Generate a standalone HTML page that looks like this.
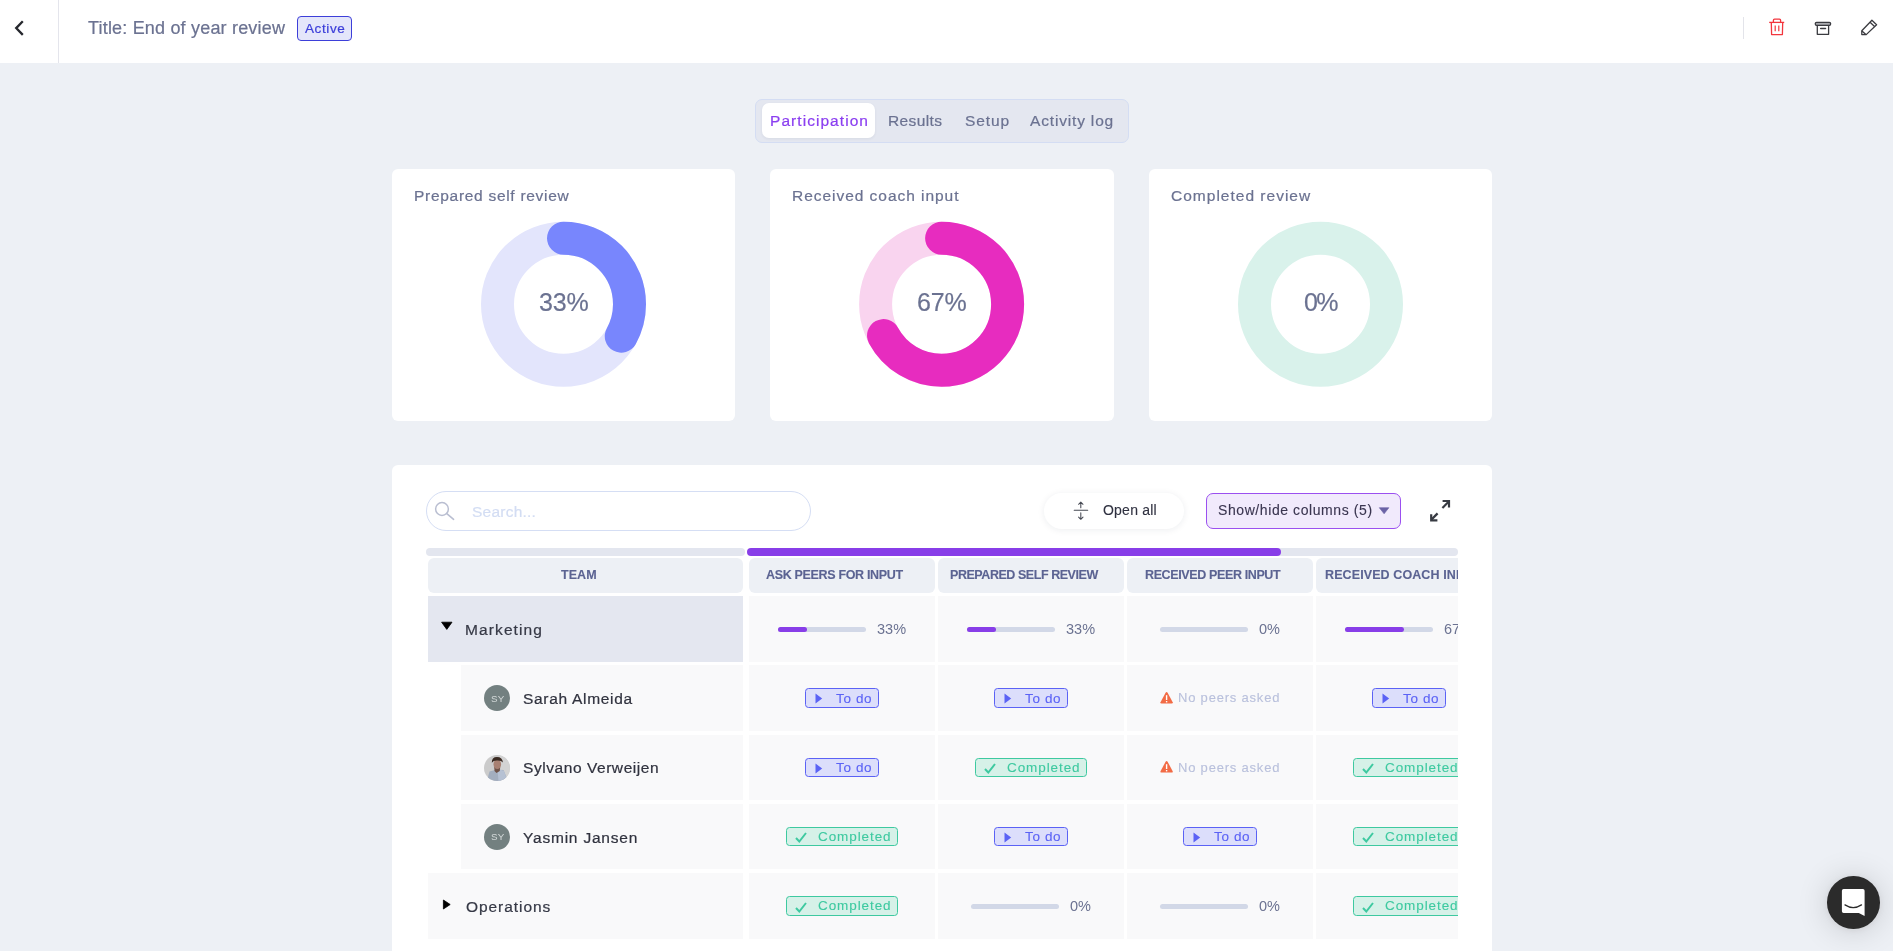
<!DOCTYPE html>
<html><head><meta charset="utf-8">
<style>
html,body{margin:0;padding:0;}
body{width:1893px;height:951px;overflow:hidden;background:#edf0f5;position:relative;font-family:"Liberation Sans",sans-serif;}
.a{position:absolute;}
.t{position:absolute;white-space:nowrap;line-height:1;font-family:"Liberation Sans",sans-serif;will-change:transform;}
.s3{-webkit-text-stroke:0.22px currentColor;}
.s2{-webkit-text-stroke:0.2px currentColor;}
.s1{-webkit-text-stroke:0.12px currentColor;}
.ic{position:absolute;overflow:visible;}
.card{position:absolute;background:#fff;border-radius:6px;}
.hc{position:absolute;background:#edf0f5;border-radius:6px;top:558px;height:34.6px;}
.cell{position:absolute;background:#f9f9fa;}
.bd{position:absolute;box-sizing:border-box;border-radius:3.5px;border:1px solid;}
.bd.todo{background:#dcdefb;border-color:#5b62f5;}
.bd.comp{background:#d6f1e8;border-color:#3ec9a0;}
.pb{position:absolute;height:5px;border-radius:3px;background:#d2d8e7;}
.pf{position:absolute;height:5px;border-radius:3px;background:#883ee8;}
.av{position:absolute;width:26px;height:26px;border-radius:50%;background:#738080;}
</style></head>
<body>
<!-- header -->
<div class="a" style="left:0;top:0;width:1893px;height:63px;background:#fff;"></div>
<div class="a" style="left:58px;top:0;width:1px;height:63px;background:#e4e5ec;"></div>
<svg class="ic" style="left:0;top:0" width="60" height="60"><path d="M22.8 21.3 L16.2 28.1 L22.8 34.9" fill="none" stroke="#26282e" stroke-width="2.3" stroke-linecap="butt" stroke-linejoin="miter"/></svg>
<div class="a" style="left:297px;top:15.5px;width:55px;height:25.5px;box-sizing:border-box;border:1.3px solid #3d3fd9;border-radius:4px;background:#e4e6fa;"></div>
<div class="a" style="left:1743px;top:17px;width:1px;height:22px;background:#e3e4ea;"></div>
<svg class="ic" style="left:1760px;top:10px" width="34" height="34" viewBox="0 0 34 34">
 <g fill="none" stroke="#f2363e" stroke-width="1.3" stroke-linejoin="round">
  <path d="M9.2 12.4 H24.2"/>
  <path d="M13.4 12.3 V10.3 Q13.4 9.2 14.5 9.2 H19.5 Q20.6 9.2 20.6 10.3 V12.3"/>
  <path d="M11.3 12.5 L11.6 24.6 H22.4 L22.7 12.5"/>
  <path d="M15.2 15.5 V21.3 M18.8 15.5 V21.3" stroke-width="1.2"/>
 </g>
</svg>
<svg class="ic" style="left:1805px;top:10px" width="34" height="34" viewBox="0 0 34 34">
 <g fill="none" stroke="#3a3b40" stroke-width="1.3" stroke-linejoin="round">
  <rect x="10.3" y="12.4" width="15.3" height="2.9" rx="1.2" fill="#a9aaae"/>
  <path d="M12.3 15.4 V24.3 H23.6 V15.4"/>
  <path d="M15.6 18.5 H20.6" stroke-linecap="round"/>
 </g>
</svg>
<svg class="ic" style="left:1850px;top:10px" width="34" height="34" viewBox="0 0 34 34">
 <g fill="none" stroke="#3a3b40" stroke-width="1.3" stroke-linejoin="round">
  <path d="M11.8 24.6 L11.8 20.8 L21.9 10.3 L26.6 14.8 L16.2 24.6 Z"/>
  <path d="M20.1 12.2 L24.8 16.7"/>
  <path d="M11.9 20.9 L15.9 24.5"/>
 </g>
</svg>

<!-- tabs -->
<div class="a" style="left:755px;top:99px;width:374px;height:44px;box-sizing:border-box;border:1px solid #d4ddf3;border-radius:7px;background:#e4e7f0;"></div>
<div class="a" style="left:762px;top:103px;width:113px;height:35px;border-radius:7px;background:#fff;box-shadow:0 1px 3px rgba(40,50,80,0.07);"></div>

<!-- cards -->
<div class="card" style="left:392px;top:169px;width:343px;height:252px;"></div>
<div class="card" style="left:770px;top:169px;width:344px;height:252px;"></div>
<div class="card" style="left:1149px;top:169px;width:343px;height:252px;"></div>
<svg class="ic" style="left:0;top:0" width="1893" height="451">
 <circle cx="563.5" cy="304.2" r="66" fill="none" stroke="#e3e5fc" stroke-width="33"/>
 <circle cx="563.5" cy="304.2" r="66" fill="none" stroke="#7886fd" stroke-width="33" stroke-linecap="round" stroke-dasharray="136.85 1000" transform="rotate(-90 563.5 304.2)"/>
 <circle cx="941.6" cy="304.2" r="66" fill="none" stroke="#f9d4ef" stroke-width="33"/>
 <circle cx="941.6" cy="304.2" r="66" fill="none" stroke="#e72cbf" stroke-width="33" stroke-linecap="round" stroke-dasharray="277.84 1000" transform="rotate(-90 941.6 304.2)"/>
 <circle cx="1320.5" cy="304.2" r="66" fill="none" stroke="#d9f2eb" stroke-width="33"/>
</svg>

<!-- table card -->
<div class="card" style="left:392px;top:465px;width:1100px;height:520px;"></div>
<div class="a" style="left:426px;top:491px;width:384.5px;height:39.5px;box-sizing:border-box;border:1px solid #d5def4;border-radius:20px;background:#fff;"></div>
<svg class="ic" style="left:0;top:0" width="500" height="540"><circle cx="442" cy="509" r="6.4" fill="none" stroke="#b9bed1" stroke-width="1.5"/><path d="M446.8 513.6 L453.6 519.3" stroke="#b9bed1" stroke-width="1.6" stroke-linecap="round"/></svg>
<div class="a" style="left:1044px;top:492.5px;width:140px;height:36.5px;border-radius:19px;background:#fff;box-shadow:0 1px 7px rgba(30,40,60,0.08);"></div>
<svg class="ic" style="left:1060px;top:495px" width="40" height="30" viewBox="0 0 40 30">
 <g fill="none" stroke="#464953" stroke-width="1.05" stroke-linecap="round" stroke-linejoin="round">
  <path d="M14.2 15.3 H27.7"/>
  <path d="M20.8 7.3 V12.8 M18.6 9.3 L20.8 7.1 L23 9.3"/>
  <path d="M20.8 17.8 V24.2 M18.6 22.1 L20.8 24.3 L23 22.1"/>
 </g>
</svg>
<div class="a" style="left:1206px;top:493px;width:195px;height:36px;box-sizing:border-box;border:1.5px solid #9b4ff0;border-radius:7px;background:#f1eafc;"></div>
<svg class="ic" style="left:1370px;top:500px" width="30" height="20"><path d="M9.3 7.7 H18.9 L14.1 13.8 Z" fill="#6b63a6" stroke="#6b63a6" stroke-width="0.6" stroke-linejoin="round"/></svg>
<svg class="ic" style="left:1420px;top:490px" width="40" height="40" viewBox="0 0 40 40">
 <g fill="none" stroke="#373a42" stroke-width="2.2" stroke-linecap="butt">
  <path d="M11.4 29.6 L17.6 23.4"/><path d="M11.2 24.2 V30.4 H17.4"/>
  <path d="M28.6 11.8 L22.4 18"/><path d="M22.6 11 H29 V17.4"/>
 </g>
</svg>

<!-- scrollbar -->
<div class="a" style="left:426px;top:548.2px;width:319px;height:7.5px;border-radius:4px;background:#e3e6ef;"></div>
<div class="a" style="left:1270px;top:548.2px;width:188px;height:7.5px;border-radius:4px;background:#e3e6ef;"></div>
<div class="a" style="left:747px;top:548.2px;width:534px;height:7.5px;border-radius:4px;background:#883ee8;"></div>

<!-- first col -->
<div class="hc" style="left:428px;width:315px;"></div>
<div class="a" style="left:428px;top:596px;width:315px;height:65.6px;background:#e4e7f0;"></div>
<div class="a" style="left:461px;top:665.25px;width:282px;height:65.6px;background:#f9f9fa;"></div>
<div class="a" style="left:461px;top:734.5px;width:282px;height:65.6px;background:#f9f9fa;"></div>
<div class="a" style="left:461px;top:803.75px;width:282px;height:65.6px;background:#f9f9fa;"></div>
<div class="a" style="left:428px;top:873px;width:315px;height:65.6px;background:#f9f9fa;"></div>
<svg class="ic" style="left:430px;top:610px" width="30" height="30"><path d="M11.6 12.2 H22 L16.8 19.4 Z" fill="#000" stroke="#000" stroke-width="0.8" stroke-linejoin="round"/></svg>
<svg class="ic" style="left:430px;top:890px" width="30" height="30"><path d="M13.4 10 L20.2 14.5 L13.4 19 Z" fill="#000" stroke="#000" stroke-width="0.8" stroke-linejoin="round"/></svg>
<div class="av" style="left:484px;top:685.4px;"></div>
<div class="t" style="left:490.6px;top:693.8px;font-size:9.8px;color:#d3d8d8;letter-spacing:0.3px">SY</div>
<svg class="ic" style="left:484px;top:754.9px" width="26" height="26" viewBox="0 0 26 26"><defs><clipPath id="avc"><circle cx="13" cy="13" r="13"/></clipPath></defs>
<g clip-path="url(#avc)"><rect width="26" height="26" fill="#cbcbcb"/><rect x="15" width="11" height="26" fill="#d3d3d3"/>
<path d="M5.5 16.5 Q12 13.8 19.5 15 L24 26 H3 Z" fill="#a3aebf"/><path d="M13.5 14.5 Q17.5 14.3 20 16 L23.5 26 H14.5 Z" fill="#b6c1d3"/>
<path d="M10.2 12 L16.2 12 L15.8 16 L12.5 18 L10.5 16Z" fill="#6f5248"/>
<ellipse cx="13.3" cy="9.2" rx="3.8" ry="4.9" fill="#a88072"/>
<path d="M7.8 7.8 Q7.6 1.9 13 1.9 Q18.6 1.9 18.9 7.6 Q17.2 5.4 13.3 5.6 Q9.6 5.4 7.8 7.8Z" fill="#3a2a22"/>
</g></svg>
<div class="av" style="left:484px;top:823.9px;"></div>
<div class="t" style="left:490.6px;top:832.3px;font-size:9.8px;color:#d3d8d8;letter-spacing:0.3px">SY</div>

<!-- other columns (clipped) -->
<div class="a" style="left:0;top:0;width:1458px;height:951px;overflow:hidden;">
<div class="hc" style="left:749px;width:186px;"></div>
<div class="hc" style="left:938px;width:186px;"></div>
<div class="hc" style="left:1127px;width:186px;"></div>
<div class="hc" style="left:1316px;width:186px;"></div>
<div class="cell" style="left:749px;top:596.00px;width:186px;height:65.6px"></div>
<div class="pb" style="left:778.19px;top:627.10px;width:88px"></div><div class="pf" style="left:778.19px;top:627.10px;width:29.04px"></div><div class="t" style="left:876.69px;top:621.73px;font-size:14.5px;color:#6b7291">33%</div>
<div class="cell" style="left:938px;top:596.00px;width:186px;height:65.6px"></div>
<div class="pb" style="left:967.19px;top:627.10px;width:88px"></div><div class="pf" style="left:967.19px;top:627.10px;width:29.04px"></div><div class="t" style="left:1065.69px;top:621.73px;font-size:14.5px;color:#6b7291">33%</div>
<div class="cell" style="left:1127px;top:596.00px;width:186px;height:65.6px"></div>
<div class="pb" style="left:1160.22px;top:627.10px;width:88px"></div><div class="t" style="left:1258.72px;top:621.73px;font-size:14.5px;color:#6b7291">0%</div>
<div class="cell" style="left:1316px;top:596.00px;width:186px;height:65.6px"></div>
<div class="pb" style="left:1345.19px;top:627.10px;width:88px"></div><div class="pf" style="left:1345.19px;top:627.10px;width:58.96px"></div><div class="t" style="left:1443.69px;top:621.73px;font-size:14.5px;color:#6b7291">67%</div>
<div class="cell" style="left:749px;top:665.25px;width:186px;height:65.6px"></div>
<div class="bd todo" style="left:805.00px;top:688.30px;width:74px;height:19.5px"><svg class="ic" style="left:9px;top:4px" width="8" height="11" viewBox="0 0 8 11"><path d="M0.5 0.5 L7.2 5.5 L0.5 10.5Z" fill="#5b62f5"/></svg><div class="t s1" style="left:30.20px;top:2.37px;font-size:13.5px;color:#5b62f5;letter-spacing:0.646px">To do</div></div>
<div class="cell" style="left:938px;top:665.25px;width:186px;height:65.6px"></div>
<div class="bd todo" style="left:994.00px;top:688.30px;width:74px;height:19.5px"><svg class="ic" style="left:9px;top:4px" width="8" height="11" viewBox="0 0 8 11"><path d="M0.5 0.5 L7.2 5.5 L0.5 10.5Z" fill="#5b62f5"/></svg><div class="t s1" style="left:30.20px;top:2.37px;font-size:13.5px;color:#5b62f5;letter-spacing:0.646px">To do</div></div>
<div class="cell" style="left:1127px;top:665.25px;width:186px;height:65.6px"></div>
<svg class="ic" style="left:1159.50px;top:691.05px" width="14" height="14" viewBox="0 0 14 14"><path d="M6.6 1.1 Q7.2 1.1 7.6 1.8 L12.7 11.2 Q13.1 12.6 11.7 12.6 L1.5 12.6 Q0.1 12.6 0.5 11.2 L5.6 1.8 Q6 1.1 6.6 1.1Z" fill="#f26b45"/><rect x="5.9" y="4.2" width="1.4" height="4.8" fill="#fff"/><rect x="5.9" y="10" width="1.4" height="1.4" fill="#fff"/></svg><div class="t s1" style="left:1178.30px;top:691.35px;font-size:13px;color:#b9c0dc;letter-spacing:0.798px">No peers asked</div>
<div class="cell" style="left:1316px;top:665.25px;width:186px;height:65.6px"></div>
<div class="bd todo" style="left:1372.00px;top:688.30px;width:74px;height:19.5px"><svg class="ic" style="left:9px;top:4px" width="8" height="11" viewBox="0 0 8 11"><path d="M0.5 0.5 L7.2 5.5 L0.5 10.5Z" fill="#5b62f5"/></svg><div class="t s1" style="left:30.20px;top:2.37px;font-size:13.5px;color:#5b62f5;letter-spacing:0.646px">To do</div></div>
<div class="cell" style="left:749px;top:734.50px;width:186px;height:65.6px"></div>
<div class="bd todo" style="left:805.00px;top:757.55px;width:74px;height:19.5px"><svg class="ic" style="left:9px;top:4px" width="8" height="11" viewBox="0 0 8 11"><path d="M0.5 0.5 L7.2 5.5 L0.5 10.5Z" fill="#5b62f5"/></svg><div class="t s1" style="left:30.20px;top:2.37px;font-size:13.5px;color:#5b62f5;letter-spacing:0.646px">To do</div></div>
<div class="cell" style="left:938px;top:734.50px;width:186px;height:65.6px"></div>
<div class="bd comp" style="left:975.00px;top:757.55px;width:112px;height:19.5px"><svg class="ic" style="left:8px;top:4.5px" width="12" height="11" viewBox="0 0 12 11"><path d="M1 6 L4.3 9.5 L11 1" fill="none" stroke="#3ec9a0" stroke-width="2"/></svg><div class="t s1" style="left:30.70px;top:2.17px;font-size:13.5px;color:#3ec9a0;letter-spacing:0.915px">Completed</div></div>
<div class="cell" style="left:1127px;top:734.50px;width:186px;height:65.6px"></div>
<svg class="ic" style="left:1159.50px;top:760.30px" width="14" height="14" viewBox="0 0 14 14"><path d="M6.6 1.1 Q7.2 1.1 7.6 1.8 L12.7 11.2 Q13.1 12.6 11.7 12.6 L1.5 12.6 Q0.1 12.6 0.5 11.2 L5.6 1.8 Q6 1.1 6.6 1.1Z" fill="#f26b45"/><rect x="5.9" y="4.2" width="1.4" height="4.8" fill="#fff"/><rect x="5.9" y="10" width="1.4" height="1.4" fill="#fff"/></svg><div class="t s1" style="left:1178.30px;top:760.60px;font-size:13px;color:#b9c0dc;letter-spacing:0.798px">No peers asked</div>
<div class="cell" style="left:1316px;top:734.50px;width:186px;height:65.6px"></div>
<div class="bd comp" style="left:1353.00px;top:757.55px;width:112px;height:19.5px"><svg class="ic" style="left:8px;top:4.5px" width="12" height="11" viewBox="0 0 12 11"><path d="M1 6 L4.3 9.5 L11 1" fill="none" stroke="#3ec9a0" stroke-width="2"/></svg><div class="t s1" style="left:30.70px;top:2.17px;font-size:13.5px;color:#3ec9a0;letter-spacing:0.915px">Completed</div></div>
<div class="cell" style="left:749px;top:803.75px;width:186px;height:65.6px"></div>
<div class="bd comp" style="left:786.00px;top:826.80px;width:112px;height:19.5px"><svg class="ic" style="left:8px;top:4.5px" width="12" height="11" viewBox="0 0 12 11"><path d="M1 6 L4.3 9.5 L11 1" fill="none" stroke="#3ec9a0" stroke-width="2"/></svg><div class="t s1" style="left:30.70px;top:2.17px;font-size:13.5px;color:#3ec9a0;letter-spacing:0.915px">Completed</div></div>
<div class="cell" style="left:938px;top:803.75px;width:186px;height:65.6px"></div>
<div class="bd todo" style="left:994.00px;top:826.80px;width:74px;height:19.5px"><svg class="ic" style="left:9px;top:4px" width="8" height="11" viewBox="0 0 8 11"><path d="M0.5 0.5 L7.2 5.5 L0.5 10.5Z" fill="#5b62f5"/></svg><div class="t s1" style="left:30.20px;top:2.37px;font-size:13.5px;color:#5b62f5;letter-spacing:0.646px">To do</div></div>
<div class="cell" style="left:1127px;top:803.75px;width:186px;height:65.6px"></div>
<div class="bd todo" style="left:1183.00px;top:826.80px;width:74px;height:19.5px"><svg class="ic" style="left:9px;top:4px" width="8" height="11" viewBox="0 0 8 11"><path d="M0.5 0.5 L7.2 5.5 L0.5 10.5Z" fill="#5b62f5"/></svg><div class="t s1" style="left:30.20px;top:2.37px;font-size:13.5px;color:#5b62f5;letter-spacing:0.646px">To do</div></div>
<div class="cell" style="left:1316px;top:803.75px;width:186px;height:65.6px"></div>
<div class="bd comp" style="left:1353.00px;top:826.80px;width:112px;height:19.5px"><svg class="ic" style="left:8px;top:4.5px" width="12" height="11" viewBox="0 0 12 11"><path d="M1 6 L4.3 9.5 L11 1" fill="none" stroke="#3ec9a0" stroke-width="2"/></svg><div class="t s1" style="left:30.70px;top:2.17px;font-size:13.5px;color:#3ec9a0;letter-spacing:0.915px">Completed</div></div>
<div class="cell" style="left:749px;top:873.00px;width:186px;height:65.6px"></div>
<div class="bd comp" style="left:786.00px;top:896.05px;width:112px;height:19.5px"><svg class="ic" style="left:8px;top:4.5px" width="12" height="11" viewBox="0 0 12 11"><path d="M1 6 L4.3 9.5 L11 1" fill="none" stroke="#3ec9a0" stroke-width="2"/></svg><div class="t s1" style="left:30.70px;top:2.17px;font-size:13.5px;color:#3ec9a0;letter-spacing:0.915px">Completed</div></div>
<div class="cell" style="left:938px;top:873.00px;width:186px;height:65.6px"></div>
<div class="pb" style="left:971.22px;top:904.10px;width:88px"></div><div class="t" style="left:1069.72px;top:898.73px;font-size:14.5px;color:#6b7291">0%</div>
<div class="cell" style="left:1127px;top:873.00px;width:186px;height:65.6px"></div>
<div class="pb" style="left:1160.22px;top:904.10px;width:88px"></div><div class="t" style="left:1258.72px;top:898.73px;font-size:14.5px;color:#6b7291">0%</div>
<div class="cell" style="left:1316px;top:873.00px;width:186px;height:65.6px"></div>
<div class="bd comp" style="left:1353.00px;top:896.05px;width:112px;height:19.5px"><svg class="ic" style="left:8px;top:4.5px" width="12" height="11" viewBox="0 0 12 11"><path d="M1 6 L4.3 9.5 L11 1" fill="none" stroke="#3ec9a0" stroke-width="2"/></svg><div class="t s1" style="left:30.70px;top:2.17px;font-size:13.5px;color:#3ec9a0;letter-spacing:0.915px">Completed</div></div>
<div class="t s3" style="left:88.10px;top:18.66px;font-size:18px;color:#6b7291;font-weight:400;letter-spacing:0.187px;">Title: End of year review</div>
<div class="t s3" style="left:304.90px;top:21.57px;font-size:13.5px;color:#3d3fd9;font-weight:400;letter-spacing:0.609px;">Active</div>
<div class="t s3" style="left:770.00px;top:112.78px;font-size:15.5px;color:#8b3ff0;font-weight:400;letter-spacing:1.052px;">Participation</div>
<div class="t s3" style="left:888.40px;top:112.78px;font-size:15.5px;color:#6b7291;font-weight:400;letter-spacing:0.394px;">Results</div>
<div class="t s3" style="left:964.60px;top:112.78px;font-size:15.5px;color:#6b7291;font-weight:400;letter-spacing:0.879px;">Setup</div>
<div class="t s3" style="left:1030.30px;top:112.78px;font-size:15.5px;color:#6b7291;font-weight:400;letter-spacing:0.831px;">Activity log</div>
<div class="t s3" style="left:413.50px;top:187.88px;font-size:15.5px;color:#6b7291;font-weight:400;letter-spacing:0.706px;">Prepared self review</div>
<div class="t s3" style="left:791.80px;top:187.88px;font-size:15.5px;color:#6b7291;font-weight:400;letter-spacing:0.963px;">Received coach input</div>
<div class="t s3" style="left:1171.00px;top:187.88px;font-size:15.5px;color:#6b7291;font-weight:400;letter-spacing:1.009px;">Completed review</div>
<div class="t s2" style="left:538.90px;top:290.14px;font-size:25px;color:#6b7291;font-weight:400;letter-spacing:-0.204px;">33%</div>
<div class="t s2" style="left:916.60px;top:290.44px;font-size:25px;color:#6b7291;font-weight:400;letter-spacing:-0.154px;">67%</div>
<div class="t s2" style="left:1303.70px;top:290.44px;font-size:25px;color:#6b7291;font-weight:400;letter-spacing:-1.604px;">0%</div>
<div class="t s3" style="left:471.60px;top:503.78px;font-size:15.5px;color:#d3ddf3;font-weight:400;letter-spacing:0.235px;">Search...</div>
<div class="t s1" style="left:1102.60px;top:503.15px;font-size:14px;color:#2f3140;font-weight:400;letter-spacing:0.224px;">Open all</div>
<div class="t s1" style="left:1217.60px;top:503.15px;font-size:14px;color:#3a3550;font-weight:400;letter-spacing:0.583px;">Show/hide columns (5)</div>
<div class="t s1" style="left:561.00px;top:568.82px;font-size:12.5px;color:#5b6392;font-weight:700;letter-spacing:0.067px;">TEAM</div>
<div class="t s1" style="left:765.80px;top:568.82px;font-size:12.5px;color:#5b6392;font-weight:700;letter-spacing:-0.330px;">ASK PEERS FOR INPUT</div>
<div class="t s1" style="left:949.60px;top:568.82px;font-size:12.5px;color:#5b6392;font-weight:700;letter-spacing:-0.449px;">PREPARED SELF REVIEW</div>
<div class="t s1" style="left:1144.70px;top:568.82px;font-size:12.5px;color:#5b6392;font-weight:700;letter-spacing:-0.375px;">RECEIVED PEER INPUT</div>
<div class="t s3" style="left:464.70px;top:621.88px;font-size:15.5px;color:#363946;font-weight:400;letter-spacing:1.108px;">Marketing</div>
<div class="t s3" style="left:465.50px;top:898.78px;font-size:15.5px;color:#363946;font-weight:400;letter-spacing:0.937px;">Operations</div>
<div class="t s3" style="left:522.60px;top:690.88px;font-size:15.5px;color:#30323e;font-weight:400;letter-spacing:0.696px;">Sarah Almeida</div>
<div class="t s3" style="left:522.70px;top:760.38px;font-size:15.5px;color:#30323e;font-weight:400;letter-spacing:0.560px;">Sylvano Verweijen</div>
<div class="t s3" style="left:522.60px;top:829.88px;font-size:15.5px;color:#30323e;font-weight:400;letter-spacing:0.792px;">Yasmin Jansen</div>
<div class="t" style="left:1324.60px;top:568.82px;font-size:12.5px;color:#5b6392;font-weight:700;letter-spacing:0.1px;-webkit-text-stroke:0.12px currentColor">RECEIVED COACH INPUT</div>
</div>

<!-- intercom -->
<div class="a" style="left:1827.3px;top:876.3px;width:52.5px;height:52.5px;border-radius:50%;background:#2b2b2b;box-shadow:0 1px 6px rgba(0,0,0,0.06),0 2px 32px rgba(0,0,0,0.16);"></div>
<svg class="ic" style="left:1830px;top:880px" width="48" height="48" viewBox="0 0 48 48">
 <path d="M13.6 9 Q11.9 9 11.9 10.7 V31.3 Q11.9 33 13.6 33 H28.8 L34.6 35.9 V10.7 Q34.6 9 32.9 9 Z" fill="#fff"/>
 <path d="M15 24.9 Q23.2 30.2 31.5 24.9" fill="none" stroke="#2b2b2b" stroke-width="1.3" stroke-linecap="round"/>
</svg>
</body></html>
